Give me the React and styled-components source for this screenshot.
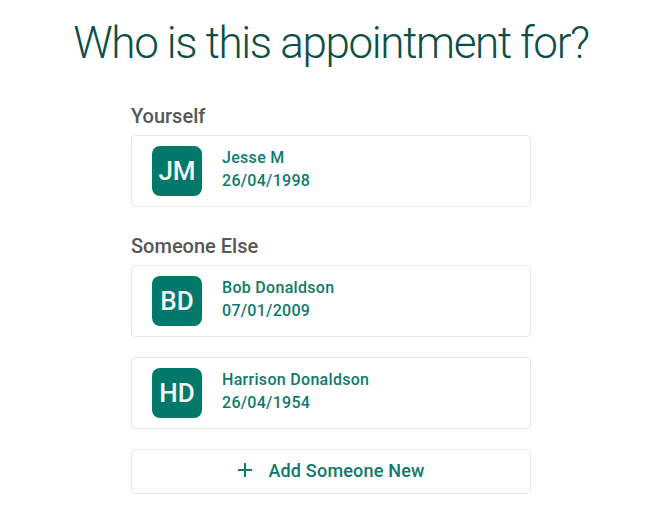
import React from "react";
import styled, { createGlobalStyle } from "styled-components";

const Global = createGlobalStyle`
  html, body { margin: 0; padding: 0; background: #ffffff; }
  body { font-family: Roboto, "Noto Sans", sans-serif; }
`;

const Page = styled.div`
  display: flex;
  flex-direction: column;
  align-items: center;
  padding: 15px 0 0 11px;
`;

const Title = styled.h1`
  margin: 0 0 34px;
  font-weight: 300;
  font-size: 44px;
  line-height: 56px;
  color: #0d4f47;
  letter-spacing: -1.35px;
`;

const Column = styled.div`
  width: 400px;
  display: flex;
  flex-direction: column;
`;

const Section = styled.div`
  display: flex;
  flex-direction: column;
  gap: 20px;
  margin-bottom: 28px;
  &:last-child { margin-bottom: 0; }
`;

const Label = styled.div`
  font-size: 20px;
  font-weight: 500;
  color: #575757;
  line-height: 22px;
  margin-bottom: -12px;
`;

const Card = styled.button`
  display: flex;
  align-items: center;
  gap: 20px;
  box-sizing: border-box;
  width: 100%;
  height: 72px;
  padding: 0 20px;
  background: #fff;
  border: 1px solid #e6e6e6;
  border-radius: 4px;
  font-family: inherit;
  text-align: left;
  cursor: pointer;
`;

const Avatar = styled.div`
  width: 50px;
  height: 50px;
  border-radius: 8px;
  background: #00796b;
  color: #f4f4f4;
  display: flex;
  align-items: center;
  justify-content: center;
  font-size: 26px;
  font-weight: 500;
  flex-shrink: 0;
`;

const Info = styled.div`
  display: flex;
  flex-direction: column;
  color: #0e7a6c;
  font-size: 16px;
  font-weight: 500;
  line-height: 23px;
  letter-spacing: 0.3px;
  padding-bottom: 4px;
`;

const AddButton = styled.button`
  display: flex;
  align-items: center;
  justify-content: center;
  gap: 15px;
  box-sizing: border-box;
  width: 100%;
  height: 45px;
  background: #fff;
  border: 1px solid #e6e6e6;
  border-radius: 4px;
  font-family: inherit;
  font-size: 18px;
  font-weight: 500;
  letter-spacing: 0.2px;
  color: #0e7a6c;
  cursor: pointer;
  padding: 0 0 3px 0;
`;

const people = {
  self: [{ initials: "JM", name: "Jesse M", dob: "26/04/1998" }],
  others: [
    { initials: "BD", name: "Bob Donaldson", dob: "07/01/2009" },
    { initials: "HD", name: "Harrison Donaldson", dob: "26/04/1954" },
  ],
};

function Person({ p }) {
  return (
    <Card>
      <Avatar>{p.initials}</Avatar>
      <Info>
        <span>{p.name}</span>
        <span>{p.dob}</span>
      </Info>
    </Card>
  );
}

export default function App() {
  return (
    <>
      <Global />
      <Page>
        <Title>Who is this appointment for?</Title>
        <Column>
          <Section>
            <Label>Yourself</Label>
            {people.self.map((p) => (
              <Person key={p.name} p={p} />
            ))}
          </Section>
          <Section>
            <Label>Someone Else</Label>
            {people.others.map((p) => (
              <Person key={p.name} p={p} />
            ))}
            <AddButton>
              <svg width="16" height="16" viewBox="0 0 16 16">
                <path d="M8 1v14M1 8h14" stroke="#0e7a6c" strokeWidth="2" />
              </svg>
              Add Someone New
            </AddButton>
          </Section>
        </Column>
      </Page>
    </>
  );
}
